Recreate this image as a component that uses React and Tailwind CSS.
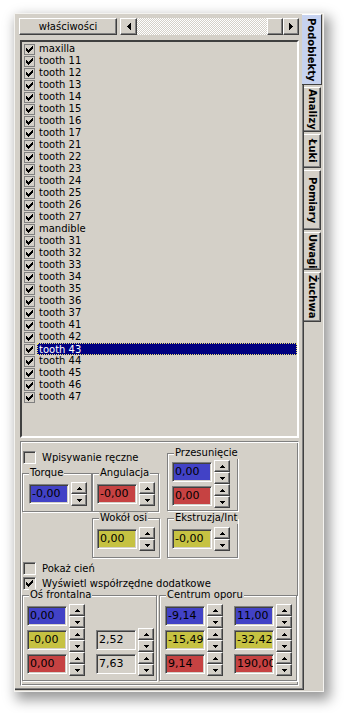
import React from "react";

const items = [
  "maxilla",
  "tooth 11", "tooth 12", "tooth 13", "tooth 14", "tooth 15", "tooth 16", "tooth 17",
  "tooth 21", "tooth 22", "tooth 23", "tooth 24", "tooth 25", "tooth 26", "tooth 27",
  "mandible",
  "tooth 31", "tooth 32", "tooth 33", "tooth 34", "tooth 35", "tooth 36", "tooth 37",
  "tooth 41", "tooth 42", "tooth 43", "tooth 44", "tooth 45", "tooth 46", "tooth 47",
];
const selected = "tooth 43";

const tabs = [
  { label: "Podobiekty", h: "h-[71px]", active: true },
  { label: "Analizy", h: "h-[45px]" },
  { label: "Łuki", h: "h-[34px]" },
  { label: "Pomiary", h: "h-[60px]" },
  { label: "Uwagi", h: "h-[38px]" },
  { label: "Żuchwa", h: "h-[50px]" },
];

// classic 7x7 check mark, one row of pixels per entry
const CHECK = [[6], [5, 6], [0, 4, 5, 6], [0, 1, 3, 4, 5], [0, 1, 2, 3, 4], [1, 2, 3], [2]];

const CheckMark = () => (
  <svg width="7" height="7" viewBox="0 0 7 7" shapeRendering="crispEdges">
    {CHECK.map((xs, y) =>
      xs.map((x) => <rect key={x + "-" + y} x={x} y={y} width="1" height="1" fill="#000" />)
    )}
  </svg>
);

const Arrow = ({ dir }) => {
  const shapes = {
    up: "M2 0h1v1h-1z M1 1h3v1h-3z M0 2h5v1h-5z",
    down: "M0 0h5v1h-5z M1 1h3v1h-3z M2 2h1v1h-1z",
    left: "M3 0h1v7h-1z M2 1h1v5h-1z M1 2h1v3h-1z M0 3h1v1h-1z",
    right: "M0 0h1v7h-1z M1 1h1v5h-1z M2 2h1v3h-1z M3 3h1v1h-1z",
  };
  const vertical = dir === "up" || dir === "down";
  return (
    <svg
      width={vertical ? 5 : 4}
      height={vertical ? 3 : 7}
      viewBox={vertical ? "0 0 5 3" : "0 0 4 7"}
      shapeRendering="crispEdges"
    >
      <path d={shapes[dir]} fill="#000" />
    </svg>
  );
};

const raised =
  "border border-t-white border-l-white border-r-[#404040] border-b-[#404040] shadow-[inset_-1px_-1px_0_#808080] bg-[#d4d0c8]";
const sunken =
  "border border-t-[#808080] border-l-[#808080] border-r-white border-b-white shadow-[inset_1px_1px_0_#404040,inset_-1px_-1px_0_#d4d0c8]";

const SpinBtn = ({ dir }) => (
  <div className={`flex h-[12px] w-[16px] items-center justify-center ${raised}`}>
    <Arrow dir={dir} />
  </div>
);

const Field = ({ value, color = "bg-[#d4d0c8]" }) => (
  <div className="flex items-start gap-[2px]">
    <div
      className={`mt-[2px] flex h-[20px] w-[40px] items-center overflow-hidden whitespace-nowrap pl-[2px] text-[11px] text-black ${sunken} ${color}`}
    >
      {value}
    </div>
    <div className="flex flex-col">
      <SpinBtn dir="up" />
      <SpinBtn dir="down" />
    </div>
  </div>
);

const Group = ({ label, className, labelClass = "", children }) => (
  <div
    className={`relative border border-[#808080] shadow-[inset_1px_1px_0_#fff,1px_1px_0_#fff] ${className}`}
  >
    <span
      className={`absolute left-[6px] top-[-7px] whitespace-nowrap bg-[#d4d0c8] px-[1px] text-[10px] leading-[12px] ${labelClass}`}
    >
      {label}
    </span>
    {children}
  </div>
);

const Check = ({ label, checked }) => (
  <div className="flex items-center gap-[6px]">
    <div className={`flex h-[13px] w-[13px] items-center justify-center bg-[#d4d0c8] ${sunken}`}>
      {checked && <CheckMark />}
    </div>
    <span className="text-[10px] leading-[13px]">{label}</span>
  </div>
);

export default function App() {
  return (
    <div className="min-h-[713px] bg-white pt-[13px] pl-[14px] text-black [font-family:'DejaVu_Sans',sans-serif]">
      <div className="flex h-[679px] w-[310px] border border-[#f4f3f0] bg-[#d4d0c8] shadow-[4px_6px_12px_2px_rgba(0,0,0,0.4)]">
        {/* page area */}
        <div className="flex h-[676px] w-[289px] shrink-0 flex-col border-r border-b border-[#404040] pt-[4px] pl-[4px] shadow-[inset_-1px_-1px_0_#808080]">
          {/* top row */}
          <div className="flex h-[17px]">
            <div className={`flex w-[98px] items-center justify-center text-[10px] ${raised}`}>
              właściwości
            </div>
            <div className="ml-[3px] flex w-[179px]">
              <div className={`flex w-[17px] items-center justify-center ${raised}`}>
                <Arrow dir="left" />
              </div>
              <div className="flex-1 [background:repeating-conic-gradient(#fff_0_25%,#d4d0c8_0_50%)_0_0/2px_2px]" />
              <div className={`w-[16px] ${raised}`} />
              <div className={`flex w-[16px] items-center justify-center ${raised}`}>
                <Arrow dir="right" />
              </div>
            </div>
          </div>

          {/* list of subobjects */}
          <div className="mt-[5px] ml-[1px] h-[398px] w-[279px] border-2 border-t-[#404040] border-l-[#404040] border-r-white border-b-white pt-[1px]">
            {items.map((it) => {
              const sel = it === selected;
              return (
                <div key={it} className="flex h-[12px] items-center">
                  <div className="ml-[2px] flex h-[11px] w-[11px] items-center justify-center border border-[#808080]">
                    <CheckMark />
                  </div>
                  <div
                    className={
                      sel
                        ? "ml-[2px] flex h-[12px] flex-1 items-center border border-dotted border-[#e8e070] bg-[#000080] pl-[1px] text-[10px] text-white"
                        : "ml-[2px] pl-[2px] text-[10px] leading-[12px]"
                    }
                  >
                    {it}
                  </div>
                </div>
              );
            })}
          </div>

          {/* lower properties panel */}
          <div className="mt-[3px] ml-[1px] h-[245px] w-[279px] border border-t-[#808080] border-l-[#808080] border-r-white border-b-white pl-[1px] shadow-[inset_1px_1px_0_#fff,inset_-1px_-1px_0_#808080]">
            <div className="flex items-start">
              <div className="flex w-[138px] flex-col">
                <div className="mt-[9px] ml-[1px]">
                  <Check label="Wpisywanie ręczne" />
                </div>
                <div className="mt-[9px] flex">
                  <Group label="Torque" className="h-[39px] w-[70px] pt-[8px] pl-[6px]">
                    <Field value="-0,00" color="bg-[#4242c6]" />
                  </Group>
                  <Group label="Angulacja" className="h-[39px] w-[67px] pt-[8px] pl-[4px]">
                    <Field value="-0,00" color="bg-[#c64242]" />
                  </Group>
                </div>
                <Group label="Wokół osi" className="mt-[6px] ml-[70px] h-[40px] w-[68px] pt-[8px] pl-[4px]">
                  <Field value="0,00" color="bg-[#c6c242]" />
                </Group>
              </div>
              <div className="ml-[7px] flex flex-col">
                <Group label="Przesunięcie" className="mt-[11px] h-[58px] w-[71px] pt-[6px] pl-[4px]">
                  <Field value="0,00" color="bg-[#4242c6]" />
                  <Field value="0,00" color="bg-[#c64242]" />
                </Group>
                <Group
                  label="Ekstruzja/Intruzja"
                  labelClass="w-[64px] overflow-hidden"
                  className="mt-[7px] h-[40px] w-[71px] pt-[8px] pl-[4px]"
                >
                  <Field value="-0,00" color="bg-[#c6c242]" />
                </Group>
              </div>
            </div>

            <div className="mt-[4px] ml-[1px] flex flex-col gap-[2px]">
              <Check label="Pokaż cień" />
              <Check label="Wyświetl współrzędne dodatkowe" checked />
            </div>

            <div className="mt-[5px] flex">
              <Group label="Oś frontalna" className="flex h-[86px] w-[135px] gap-[11px] pt-[8px] pl-[4px]">
                <div className="flex flex-col">
                  <Field value="0,00" color="bg-[#4242c6]" />
                  <Field value="-0,00" color="bg-[#c6c242]" />
                  <Field value="0,00" color="bg-[#c64242]" />
                </div>
                <div className="flex flex-col pt-[24px]">
                  <Field value="2,52" />
                  <Field value="7,63" />
                </div>
              </Group>
              <Group label="Centrum oporu" className="ml-[2px] flex h-[86px] w-[138px] gap-[11px] pt-[8px] pl-[5px]">
                <div className="flex flex-col">
                  <Field value="-9,14" color="bg-[#4242c6]" />
                  <Field value="-15,49" color="bg-[#c6c242]" />
                  <Field value="9,14" color="bg-[#c64242]" />
                </div>
                <div className="flex flex-col">
                  <Field value="11,00" color="bg-[#4242c6]" />
                  <Field value="-32,42" color="bg-[#c6c242]" />
                  <Field value="190,00" color="bg-[#c64242]" />
                </div>
              </Group>
            </div>
          </div>
        </div>

        {/* vertical tabs on the right */}
        <div className="flex flex-col gap-[2px]">
          {tabs.map((t) =>
            t.active ? (
              <div
                key={t.label}
                className={`relative z-10 ml-[-2px] flex w-[20px] items-center justify-center border-t border-r border-b border-t-white border-r-[#404040] border-b-[#404040] bg-[#c6d2f0] text-[10px] font-bold [writing-mode:vertical-rl] ${t.h}`}
              >
                {t.label}
              </div>
            ) : (
              <div
                key={t.label}
                className={`flex w-[17px] items-center justify-center border-t border-r border-b border-t-white border-r-[#404040] border-b-[#404040] text-[10px] font-bold shadow-[inset_-1px_-1px_0_#808080] [writing-mode:vertical-rl] ${t.h}`}
              >
                {t.label}
              </div>
            )
          )}
        </div>
      </div>
    </div>
  );
}
